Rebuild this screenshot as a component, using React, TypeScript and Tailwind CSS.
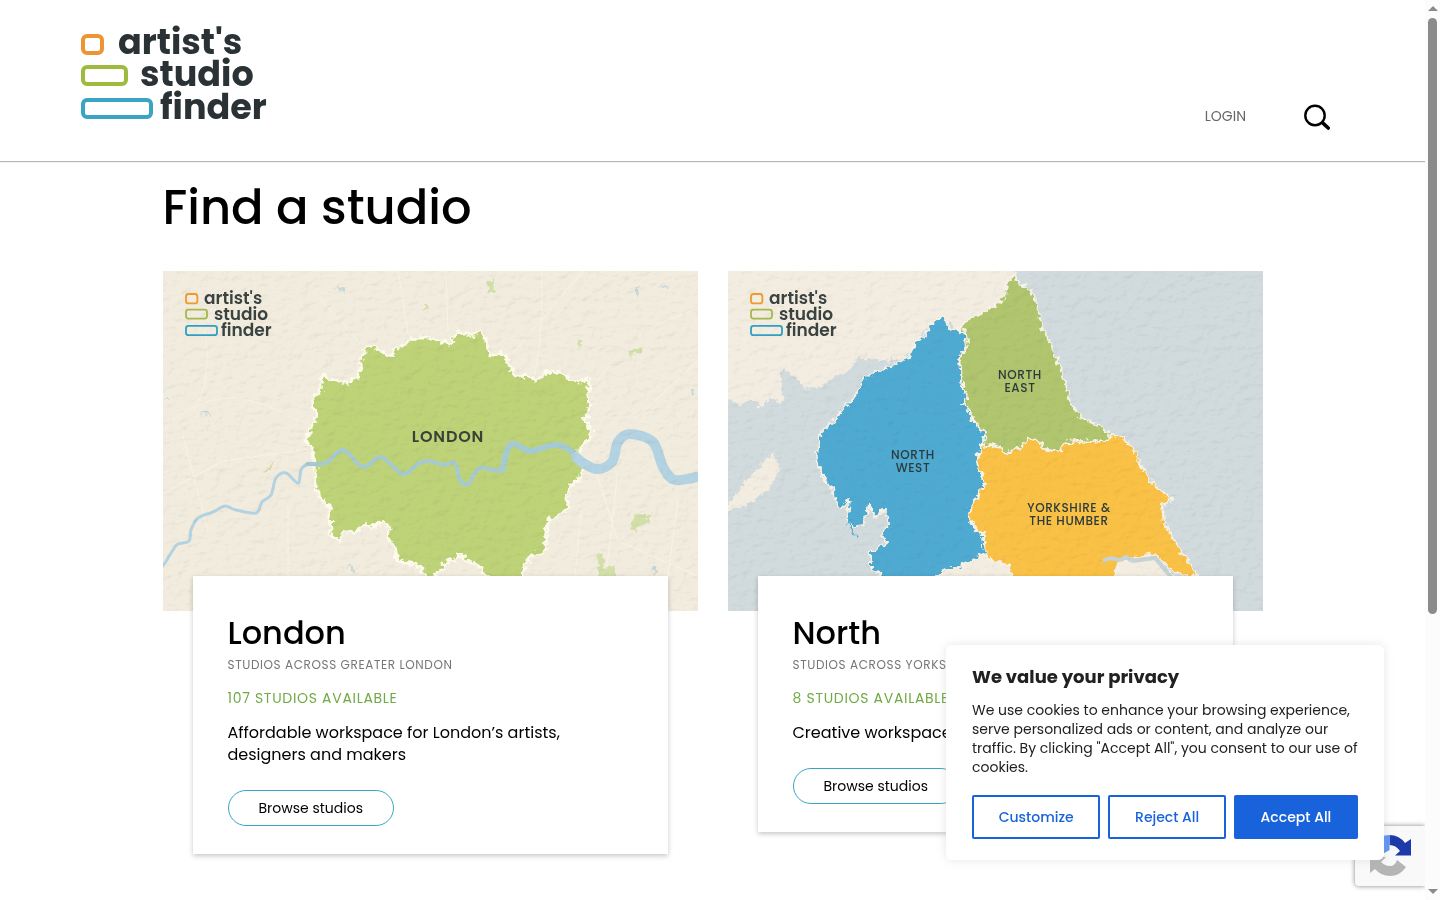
import React from 'react';

type Point = [number, number];

interface Region {
    id: string;
    title: string;
    subtitle: string;
    available: string;
    description: string;
    map: React.ReactNode;
}

const toPoints = (points: Point[]) => points.map((p) => p.join(',')).join(' ');

// Catmull-Rom curve through the points, used for the rivers
const smoothPath = (points: Point[]) => {
    let d = `M${points[0][0]} ${points[0][1]}`;
    for (let i = 0; i < points.length - 1; i++) {
        const p0 = points[i - 1] || points[i];
        const p1 = points[i];
        const p2 = points[i + 1];
        const p3 = points[i + 2] || p2;
        d += ` C${p1[0] + (p2[0] - p0[0]) / 6} ${p1[1] + (p2[1] - p0[1]) / 6} ${p2[0] - (p3[0] - p1[0]) / 6} ${p2[1] - (p3[1] - p1[1]) / 6} ${p2[0]} ${p2[1]}`;
    }
    return d;
};

const londonOutline: Point[] = [
    [162, 105], [166, 108], [172, 109], [178, 111], [184, 113], [188, 110], [194, 107], [195, 101], [199, 98], [197, 91], [199, 83],
    [204, 76], [211, 76], [216, 79], [221, 81], [224, 85], [229, 85], [232, 78], [240, 75], [246, 69], [255, 67], [264, 67], [270, 67],
    [279, 71], [287, 72], [292, 64], [295, 59], [300, 62], [307, 64], [317, 61], [321, 64], [325, 77], [329, 85], [337, 82], [344, 86],
    [347, 97], [354, 106], [364, 105], [372, 108], [380, 106], [384, 100], [394, 101], [402, 102], [407, 110], [419, 111], [424, 107],
    [427, 117], [424, 125], [428, 136], [421, 149], [429, 162], [424, 171], [417, 176], [415, 184], [420, 196], [416, 209], [409, 214],
    [403, 227], [406, 236], [397, 244], [385, 249], [384, 262], [382, 281], [372, 283], [362, 292], [360, 304], [357, 320], [335, 320],
    [324, 306], [315, 294], [304, 289], [297, 283], [292, 289], [282, 291], [279, 299], [272, 305], [268, 314], [262, 305], [258, 296],
    [247, 292], [235, 291], [232, 276], [223, 264], [228, 257], [220, 251], [208, 256], [202, 253], [193, 261], [182, 261], [175, 268],
    [168, 264], [167, 236], [158, 229], [153, 217], [152, 196], [149, 179], [143, 169], [148, 157], [154, 144], [148, 131], [157, 119],
    [159, 106],
];

const thamesWest: Point[] = [
    [-2, 297], [2, 292], [10, 279], [15, 273], [26, 270], [28, 259], [35, 247], [50, 241], [62, 235], [73, 239], [93, 242], [99, 231],
    [108, 224], [113, 207], [123, 202], [135, 212], [138, 199], [145, 193], [155, 193],
];
const thamesCity: Point[] = [
    [145, 193], [163, 192], [180, 179], [200, 196], [218, 186], [240, 203], [256, 192], [268, 190], [280, 194], [292, 192], [297, 209],
    [305, 213], [317, 197], [339, 199], [345, 177], [352, 173], [367, 180],
];
const thamesDocks: Point[] = [[339, 199], [345, 177], [352, 173], [367, 180], [390, 174], [404, 177], [420, 192]];
const thamesEast: Point[] = [
    [413, 186], [420, 192], [434, 198], [449, 191], [455, 171], [467, 163], [490, 171], [500, 196], [512, 209], [538, 205],
];

const scotland: Point[] = [
    [-6, -6], [290, -6], [285, 5], [277, 27], [230, 59], [218, 49], [200, 56], [185, 76], [177, 87], [157, 90], [135, 87], [127, 89],
    [123, 99], [103, 107], [97, 114], [80, 119], [68, 107], [55, 98], [52, 102], [55, 132], [43, 127], [33, 137], [23, 129], [12, 134],
    [-6, 124],
];
const isleOfMan: Point[] = [
    [45, 181], [52, 200], [40, 220], [20, 234], [-4, 240], [10, 222], [20, 207], [35, 192],
];
const northWest: Point[] = [
    [213, 45], [218, 50], [220, 56], [230, 59], [238, 62], [239, 77], [231, 86], [233, 109], [239, 126], [236, 134], [243, 142],
    [245, 151], [257, 161], [255, 172], [248, 189], [257, 212], [240, 242], [247, 257], [255, 264], [257, 281], [240, 292], [230, 297],
    [217, 297], [208, 306], [204, 320], [153, 320], [151, 301], [143, 299], [143, 282], [158, 271], [153, 264], [161, 254], [157, 237],
    [148, 247], [141, 234], [135, 254], [125, 256], [119, 249], [121, 228], [113, 238], [108, 232], [105, 217], [98, 212], [88, 189],
    [93, 162], [106, 149], [126, 127], [136, 107], [153, 99], [180, 87], [187, 72], [198, 64], [202, 54],
];
const northEast: Point[] = [
    [285, 5], [290, 11], [305, 21], [309, 36], [315, 59], [324, 76], [334, 102], [344, 136], [354, 146], [369, 154], [381, 162],
    [379, 170], [362, 171], [349, 170], [335, 172], [333, 181], [319, 179], [312, 172], [302, 167], [292, 176], [279, 182], [267, 174],
    [257, 177], [255, 172], [257, 161], [245, 151], [243, 142], [236, 134], [239, 126], [233, 109], [231, 86], [239, 77], [238, 62],
    [230, 59], [245, 46], [262, 38], [277, 26], [279, 11],
];
const yorkshire: Point[] = [
    [255, 172], [257, 177], [267, 174], [279, 182], [292, 176], [302, 167], [312, 172], [319, 179], [333, 181], [335, 172], [349, 170],
    [362, 171], [379, 170], [381, 162], [395, 167], [407, 181], [417, 202], [429, 217], [445, 228], [434, 234], [436, 252], [450, 276],
    [470, 305], [449, 303], [435, 292], [429, 284], [405, 287], [390, 292], [387, 306], [387, 320], [283, 320], [284, 304], [279, 294],
    [262, 289], [257, 281], [255, 264], [247, 257], [240, 242], [257, 212], [248, 189],
];
const lincolnshire: Point[] = [
    [200, 330], [208, 306], [217, 297], [230, 297], [257, 281], [270, 290], [390, 290], [410, 290], [428, 287], [446, 306], [470, 330],
];

const Logo = () => (
    <svg width="190" height="106" viewBox="0 0 190 106" className="block overflow-visible">
        <g fill="none" strokeWidth="4">
            <rect x="3" y="12" width="19" height="17" rx="4" stroke="#ee9433" />
            <rect x="3" y="43" width="43" height="17" rx="4" stroke="#9dbb3c" />
            <rect x="3" y="76" width="68" height="17" rx="4" stroke="#3ba3c3" />
        </g>
        <g fill="#2b3235" className="font-['Poppins','Inter',sans-serif] text-[35px] font-bold">
            <text x="38" y="30">artist's</text>
            <text x="60" y="62">studio</text>
            <text x="80" y="95">finder</text>
        </g>
    </svg>
);

// Small version of the logo printed on the maps
const MapLogo = () => (
    <>
        <g fill="none" strokeWidth="1.8">
            <rect x="23" y="23" width="11.4" height="9.4" rx="2.5" stroke="#ee9a2c" />
            <rect x="23" y="38.6" width="21" height="9" rx="2.5" stroke="#a5b84c" />
            <rect x="23" y="54.8" width="31" height="9.4" rx="2.5" stroke="#2f9fc4" />
        </g>
        <g fill="#3b4341" className="font-['Poppins','Inter',sans-serif] text-[17px] font-semibold">
            <text x="41" y="33">artist's</text>
            <text x="51" y="49">studio</text>
            <text x="58" y="65">finder</text>
        </g>
    </>
);

const MapDefs = ({ id }: { id: string }) => (
    <defs>
        <filter id={`${id}-rough`} x="-5%" y="-5%" width="110%" height="110%">
            <feTurbulence type="fractalNoise" baseFrequency="0.2" numOctaves="2" seed="4" />
            <feDisplacementMap in="SourceGraphic" scale="9" xChannelSelector="R" yChannelSelector="G" />
        </filter>
        <filter id={`${id}-paper`} x="0" y="0" width="100%" height="100%">
            <feTurbulence type="fractalNoise" baseFrequency="0.09 0.14" numOctaves="4" seed="9" result="noise" />
            <feDiffuseLighting in="noise" lightingColor="#ffffff" surfaceScale="2" diffuseConstant="1.2">
                <feDistantLight azimuth="225" elevation="56" />
            </feDiffuseLighting>
        </filter>
    </defs>
);

const LondonMap = () => (
    <svg viewBox="0 0 535 340" role="img" aria-label="Map of London" className="block w-full bg-[#f2ecde]">
        <MapDefs id="london" />
        <g fill="none" stroke="#f8f3e7" strokeWidth="1">
            <path d="M0 160Q50 105 120 142T195 118M0 222 60 190 145 178M20 165 45 260M42 60Q50 110 30 140" />
            <path d="M235 0 245 62M379 0Q380 60 372 104M283 0 285 62M420 0 350 82M535 38C480 55 465 70 430 115M535 90 470 150M430 190 455 270 535 305M125 235V340M418 240Q415 280 408 340M515 230 500 340M150 20 195 70M455 200 440 330" />
        </g>
        <g fill="#d3dfa8" filter="url(#london-rough)">
            <path d="M325 10h7l-1 11h-5ZM260 32h6l-4 9ZM467 80l12-3v5l-12 2ZM468 252l8-11 8 4 5-4-4 11-8 3-5 5-6-3ZM434 283l5-1 2 16 9-3 4 13-16 5ZM102 199l9-9-4 9-6 3ZM413 70h7l-3 7Z" />
        </g>
        <g fill="#c5d8da" filter="url(#london-rough)">
            <path d="M174 15l8 1v6ZM36 142l8-2 1 4ZM471 20l5-4-1 10ZM496 18l8-4 2 3ZM527 117l5 1-2 8ZM184 294l6 2 1 7ZM489 295l6 4-2 6ZM0 127l6-1v2Z" />
        </g>
        <polygon
            points={toPoints(londonOutline)}
            fill="#bed278"
            stroke="#fdfbec"
            strokeWidth="3"
            strokeLinejoin="round"
            filter="url(#london-rough)"
        />
        <g fill="none" stroke="#b3d2e2" strokeLinecap="round" strokeLinejoin="round">
            <path d={smoothPath(thamesWest)} strokeWidth="3" />
            <path d={smoothPath(thamesCity)} strokeWidth="4" stroke="#a5cad2" />
            <path d={smoothPath(thamesDocks)} strokeWidth="6" stroke="#a5cad2" />
            <path d={smoothPath(thamesEast)} strokeWidth="10" />
        </g>
        <rect width="535" height="340" filter="url(#london-paper)" className="opacity-20 mix-blend-multiply" />
        <text
            x="285"
            y="171"
            textAnchor="middle"
            fill="#3a4238"
            className="font-['Poppins','Inter',sans-serif] text-[16px] font-semibold tracking-wider"
        >
            LONDON
        </text>
        <MapLogo />
    </svg>
);

const NorthMap = () => (
    <svg viewBox="0 0 535 340" role="img" aria-label="Map of the north of England" className="block w-full bg-[#d1dadc]">
        <MapDefs id="north" />
        <g filter="url(#north-rough)" strokeLinejoin="round">
            <g fill="#f3ece1">
                <polygon points={toPoints(scotland)} />
                <polygon points={toPoints(isleOfMan)} />
                <polygon points={toPoints(lincolnshire)} />
            </g>
            <g stroke="#f6f3e6" strokeWidth="2">
                <polygon points={toPoints(northWest)} fill="#50aad2" />
                <polygon points={toPoints(northEast)} fill="#b0c56e" />
                <polygon points={toPoints(yorkshire)} fill="#f9c144" />
            </g>
            <path d="M121 250Q122 262 131 266" fill="none" stroke="#50aad2" strokeWidth="2" />
        </g>
        <path d="M375 290 382 287 392 289 398 286 405 290 427 287 443 306" fill="none" stroke="#c6d3d7" strokeWidth="4" />
        <rect width="535" height="340" filter="url(#north-paper)" className="opacity-20 mix-blend-multiply" />
        <g
            textAnchor="middle"
            fill="#2d3b3c"
            className="font-['Poppins','Inter',sans-serif] text-[12px] font-medium tracking-wider"
        >
            <text x="292" y="108">NORTH</text>
            <text x="292" y="121">EAST</text>
            <text x="185" y="188">NORTH</text>
            <text x="185" y="201">WEST</text>
            <text x="341" y="241">YORKSHIRE &amp;</text>
            <text x="341" y="254">THE HUMBER</text>
        </g>
        <MapLogo />
    </svg>
);

const regions: Region[] = [
    {
        id: 'london',
        title: 'London',
        subtitle: 'Studios across Greater London',
        available: '107 studios available',
        description: 'Affordable workspace for London’s artists, designers and makers',
        map: <LondonMap />,
    },
    {
        id: 'north',
        title: 'North',
        subtitle: 'Studios across Yorkshire',
        available: '8 studios available',
        description: 'Creative workspace',
        map: <NorthMap />,
    },
];

const Header = () => (
    <header className="flex items-end justify-between border-b border-[#b5b5b5] pt-6 pr-[95px] pb-[31px] pl-20 shadow-2xs">
        <a href="#home" aria-label="Artist’s studio finder">
            <Logo />
        </a>
        <nav className="flex items-end gap-[58px]">
            <a href="#login" className="text-sm leading-7 text-[#666666]">LOGIN</a>
            <button type="button" aria-label="Search">
                <svg width="26" height="26" viewBox="0 0 26 26" fill="none" stroke="#000000" className="block">
                    <circle cx="11" cy="11.5" r="9.7" strokeWidth="2.4" />
                    <path d="M17.5 18 20 20.5" strokeWidth="2.4" />
                    <path d="M19.5 19.7 24.2 24" strokeWidth="3.6" strokeLinecap="round" />
                </svg>
            </button>
        </nav>
    </header>
);

const RegionCard = ({ region }: { region: Region }) => (
    <article>
        {region.map}
        <div className="relative mx-[30px] -mt-[35px] bg-white px-[35px] pt-[35px] pb-7 shadow-[0_2px_5px_rgba(0,0,0,0.22)]">
            <h2 className="text-[32px] leading-[44px] font-medium">{region.title}</h2>
            <p className="text-xs leading-5 tracking-wider text-[#777777] uppercase">{region.subtitle}</p>
            <p className="mt-3 text-sm leading-[22px] tracking-wider text-[#72aa45] uppercase">{region.available}</p>
            <p className="mt-[13px] text-base leading-[22px]">{region.description}</p>
            <a
                href={`#${region.id}`}
                className="mt-6 inline-flex h-9 items-center rounded-full border border-[#3ba3c3] px-[30px] align-top text-sm"
            >
                Browse studios
            </a>
        </div>
    </article>
);

const RecaptchaBadge = () => (
    <div className="fixed right-[15px] bottom-[14px] flex h-[60px] w-[70px] items-center justify-center rounded-l-sm bg-[#f9f9f9] shadow-[0_0_5px_#808080]">
        <svg width="42" height="42" viewBox="0 0 42 42" role="img" aria-label="reCAPTCHA">
            <path d="M20.5 0Q30 0 36 8L42 4V20.5H26L31 16Q27 10 20.5 10Z" fill="#1c3aa9" />
            <path d="M20.5 0Q11 0 5 7L1 4V20H12L20.5 15Z" fill="#5a93f5" />
            <path d="M1 21V38L6 34Q12 41 21 41 31 41 37 32L28 25Q26 31 21 31 16 31 12 27L17 22Z" fill="#b5b5b5" />
        </svg>
    </div>
);

const CookieBanner = () => (
    <section
        aria-label="We value your privacy"
        className="fixed right-14 bottom-10 w-[438px] rounded-md bg-white px-[26px] pt-5 pb-[21px] text-[#212121] shadow-[0_0_10px_rgba(172,171,171,0.3)]"
    >
        <h2 className="text-lg leading-6 font-bold">We value your privacy</h2>
        <p className="mt-3 text-sm leading-[19px]">
            We use cookies to enhance your browsing experience, serve personalized ads or content, and analyze our traffic. By
            clicking "Accept All", you consent to our use of cookies.
        </p>
        <div className="mt-[18px] flex gap-2 text-sm font-medium">
            <button type="button" className="h-11 grow rounded-xs border-2 border-[#1863dc] text-[#1863dc]">Customize</button>
            <button type="button" className="h-11 grow rounded-xs border-2 border-[#1863dc] text-[#1863dc]">Reject All</button>
            <button type="button" className="h-11 grow rounded-xs border-2 border-[#1863dc] bg-[#1863dc] text-white">Accept All</button>
        </div>
    </section>
);

const Scrollbar = () => (
    <div aria-hidden="true" className="relative z-10 flex w-[15px] flex-col items-center justify-between bg-[#fcfcfc] py-[6px]">
        <svg width="10" height="5" viewBox="0 0 10 5" className="block">
            <path d="M0 5 5 0 10 5Z" fill="#8b8b8b" />
        </svg>
        <div className="my-[7px] w-[9px] flex-1">
            <div className="h-[69%] rounded-full bg-[#8b8b8b]" />
        </div>
        <svg width="10" height="5" viewBox="0 0 10 5" className="block">
            <path d="M0 0 5 5 10 0Z" fill="#8b8b8b" />
        </svg>
    </div>
);

const App: React.FC = () => {
    return (
        <div className="flex h-screen overflow-hidden bg-white font-['Poppins','Inter',sans-serif] text-black">
            <div className="min-w-0 flex-1 overflow-hidden">
                <Header />
                <main className="mx-auto max-w-[1100px] pt-4">
                    <h1 className="text-5xl leading-[60px] font-medium">Find a studio</h1>
                    <div className="mt-[33px] grid grid-cols-2 items-start gap-[30px]">
                        {regions.map((region) => (
                            <RegionCard key={region.id} region={region} />
                        ))}
                    </div>
                </main>
                <RecaptchaBadge />
                <CookieBanner />
            </div>
            <Scrollbar />
        </div>
    );
};

export default App;
